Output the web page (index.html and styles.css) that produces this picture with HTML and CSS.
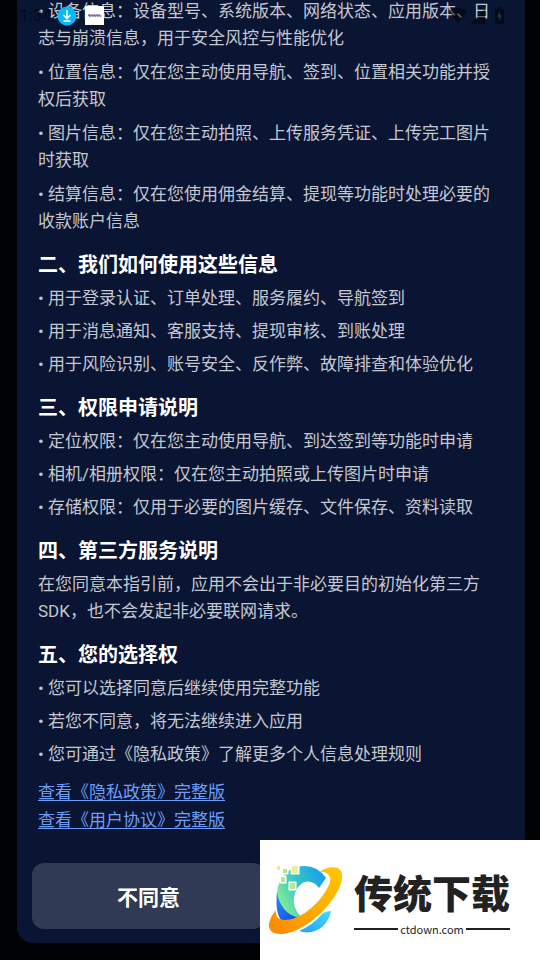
FILE: index.html
```html
<!DOCTYPE html>
<html lang="zh-CN">
<head>
<meta charset="utf-8">
<meta name="viewport" content="width=device-width, initial-scale=1">
<title>隐私指引</title>
<link rel="stylesheet" href="styles.css">
</head>
<body>
<main class="dialog">
  <div class="scroll">
    <ul class="list list-loose">
      <li>• 设备信息：设备型号、系统版本、网络状态、应用版本、日志与崩溃信息，用于安全风控与性能优化</li>
      <li>• 位置信息：仅在您主动使用导航、签到、位置相关功能并授权后获取</li>
      <li>• 图片信息：仅在您主动拍照、上传服务凭证、上传完工图片时获取</li>
      <li>• 结算信息：仅在您使用佣金结算、提现等功能时处理必要的收款账户信息</li>
    </ul>
    <h2>二、我们如何使用这些信息</h2>
    <ul class="list">
      <li>• 用于登录认证、订单处理、服务履约、导航签到</li>
      <li>• 用于消息通知、客服支持、提现审核、到账处理</li>
      <li>• 用于风险识别、账号安全、反作弊、故障排查和体验优化</li>
    </ul>
    <h2>三、权限申请说明</h2>
    <ul class="list">
      <li>• 定位权限：仅在您主动使用导航、到达签到等功能时申请</li>
      <li>• 相机/相册权限：仅在您主动拍照或上传图片时申请</li>
      <li>• 存储权限：仅用于必要的图片缓存、文件保存、资料读取</li>
    </ul>
    <h2>四、第三方服务说明</h2>
    <p>在您同意本指引前，应用不会出于非必要目的初始化第三方 SDK，也不会发起非必要联网请求。</p>
    <h2>五、您的选择权</h2>
    <ul class="list">
      <li>• 您可以选择同意后继续使用完整功能</li>
      <li>• 若您不同意，将无法继续进入应用</li>
      <li>• 您可通过《隐私政策》了解更多个人信息处理规则</li>
    </ul>
    <nav class="links">
      <a href="#privacy">查看《隐私政策》完整版</a>
      <a href="#terms">查看《用户协议》完整版</a>
    </nav>
  </div>
  <div class="actions">
    <button type="button">不同意</button>
  </div>
</main>

<header class="status">
  <span class="clock">1:34</span>
  <svg class="download" viewBox="0 0 20 20" aria-hidden="true">
    <circle cx="10" cy="10" r="9.500" fill="#09b7fb"/>
    <path d="M10 4v8M6.500 9l3.500 3.500L13.500 9M6.500 15h7" fill="none" stroke="#fff" stroke-width="1.600"/>
  </svg>
  <svg class="thumb" viewBox="0 0 19 19" aria-hidden="true">
    <path fill="#fff" d="M0 0h19v19H0z"/>
    <path d="M3 9h12M4 10h13" stroke="#26324a" stroke-dasharray="2 .6"/>
  </svg>
  <svg class="signals" viewBox="0 0 56 18" aria-hidden="true">
    <path d="M0 4q9-7 18 0l-9 13z"/>
    <path d="M21 17L36 2v15z"/>
    <path d="M46 2h2V0h4v2h3v15h-9z"/>
    <path class="bolt" d="M51 4l-3 6h2v4l3-6h-2z"/>
  </svg>
</header>

<aside class="brand">
  <svg class="brand-mark" viewBox="0 0 90 90" aria-hidden="true">
    <defs>
      <linearGradient id="ring" x1="1" y1="0" x2="0" y2="1"><stop offset="0" stop-color="#ffc800"/><stop offset=".5" stop-color="#ffac00"/><stop offset="1" stop-color="#ff8500"/></linearGradient>
      <linearGradient id="arc" x1="0" y1=".7" x2="1" y2=".2"><stop offset="0" stop-color="#90ef91"/><stop offset=".45" stop-color="#35c9c2"/><stop offset="1" stop-color="#159fed"/></linearGradient>
      <linearGradient id="deep" x1="0" y1="0" x2="1" y2="1"><stop offset="0" stop-color="#258ff1"/><stop offset="1" stop-color="#1643e8"/></linearGradient>
      <linearGradient id="tail" x1="0" y1="1" x2="1" y2="0"><stop offset="0" stop-color="#229ff1"/><stop offset="1" stop-color="#44dcff"/></linearGradient>
    </defs>
    <path fill="url(#arc)" d="M62 23Q54 11 40 11C22 12 13 25 13 41Q17 58 31 64L37 62Q28 52 30 42C33 27 46 21 55 33Z"/>
    <path fill="url(#deep)" d="M13 37C15 51 23 60 35 63Q25 69 17 65C12 58 12 47 13 37Z"/>
    <path fill="url(#tail)" d="M35 76Q49 70 59 58Q63 56 67 56C64 72 50 81 35 76Z"/>
    <path fill="url(#ring)" d="M55 17C63 12 73 10 77 16C81 25 74 38 65 49C54 63 37 75 24 78C12 81 4 77 5 69Q6 62 12 55C11 61 14 65 21 65C34 65 48 54 57 43C66 31 70 22 62 18Q59 16 55 17Z"/>
    <g class="pixels" fill="#b8e986">
      <path fill="#e5ef99" d="M13 11h3v4h-3z"/>
      <path d="M19 14h4v4h-4z"/>
      <path fill="#e3f19a" d="M28 11h6v7h-6z"/>
      <path d="M17 22h4v5h-4z"/>
      <path d="M26 28h5v6h-5z"/>
    </g>
  </svg>
  <div class="brand-words">
    <strong>传统下载</strong>
    <span class="domain">ctdown.com</span>
  </div>
</aside>
</body>
</html>
```
FILE: styles.css
```css
* {
  box-sizing: border-box;
}

body {
  margin: 0;
  height: 100vh;
  overflow: hidden;
  padding: 0 15px 17px 17px;
  background: #010204;
  font-family: Roboto, "Noto Sans CJK SC", sans-serif;
  font-size: 17px;
  line-height: 27px;
  color: #c5c8d0;
}

.dialog {
  display: flex;
  flex-direction: column;
  height: 100%;
  overflow: hidden;
  padding: 0 15px 14px;
  background: #0a1433;
  border-radius: 0 0 16px 16px;
}

.scroll {
  display: flex;
  flex: 1;
  flex-direction: column;
  justify-content: flex-end;
  min-height: 0;
  padding: 0 10px 29px 6px;
}

.list {
  display: flex;
  flex-direction: column;
  gap: 6px;
  margin: 0;
  padding: 0;
  list-style: none;
}

.list-loose {
  gap: 7px;
}

h2 {
  margin: 14px 0 4px;
  font-size: 20px;
  line-height: 32px;
  font-weight: 700;
  color: #fff;
}

p {
  margin: 0;
}

.links {
  display: flex;
  flex-direction: column;
  align-items: flex-start;
  margin-top: 10px;
  line-height: 28px;
}

.links a {
  color: #6e9ff8;
  text-underline-offset: 2px;
}

.actions {
  display: grid;
  grid-template-columns: 1fr 1fr;
  gap: 12px;
}

button {
  height: 66px;
  border: 0;
  border-radius: 12px;
  background: #303a54;
  color: #fff;
  font-family: inherit;
  font-size: 21px;
  font-weight: 700;
}

.status {
  position: absolute;
  top: 0;
  left: 0;
  display: flex;
  align-items: center;
  width: 100%;
  height: 31px;
  padding: 0 35px 0 19px;
}

.clock {
  width: 38px;
  font-size: 17px;
  color: rgba(0, 0, 0, 0.5);
}

.download {
  width: 20px;
  height: 20px;
}

.thumb {
  width: 19px;
  height: 19px;
  margin-left: 8px;
}

.signals {
  width: 56px;
  height: 18px;
  margin-left: auto;
  fill: rgba(0, 0, 0, 0.5);
}

.bolt {
  fill: #26304c;
}

.brand {
  position: absolute;
  right: 0;
  bottom: 0;
  display: flex;
  align-items: center;
  width: 280px;
  height: 120px;
  padding-left: 4px;
  background: #fff;
  color: #222;
}

.brand-mark {
  width: 90px;
  height: 90px;
}

.brand-words {
  width: 156px;
  padding-top: 6px;
  font-family: "Noto Sans CJK SC", sans-serif;
}

.brand-words strong {
  display: block;
  font-size: 39px;
  line-height: 52px;
  font-weight: 900;
  white-space: nowrap;
}

.pixels {
  stroke: #fff;
  stroke-width: 3px;
  paint-order: stroke;
}

.domain {
  display: flex;
  align-items: center;
  gap: 2px;
  font-size: 11px;
  line-height: 24px;
}

.domain::before,
.domain::after {
  content: "";
  flex: 1;
  height: 2px;
  background: #222;
}
```
